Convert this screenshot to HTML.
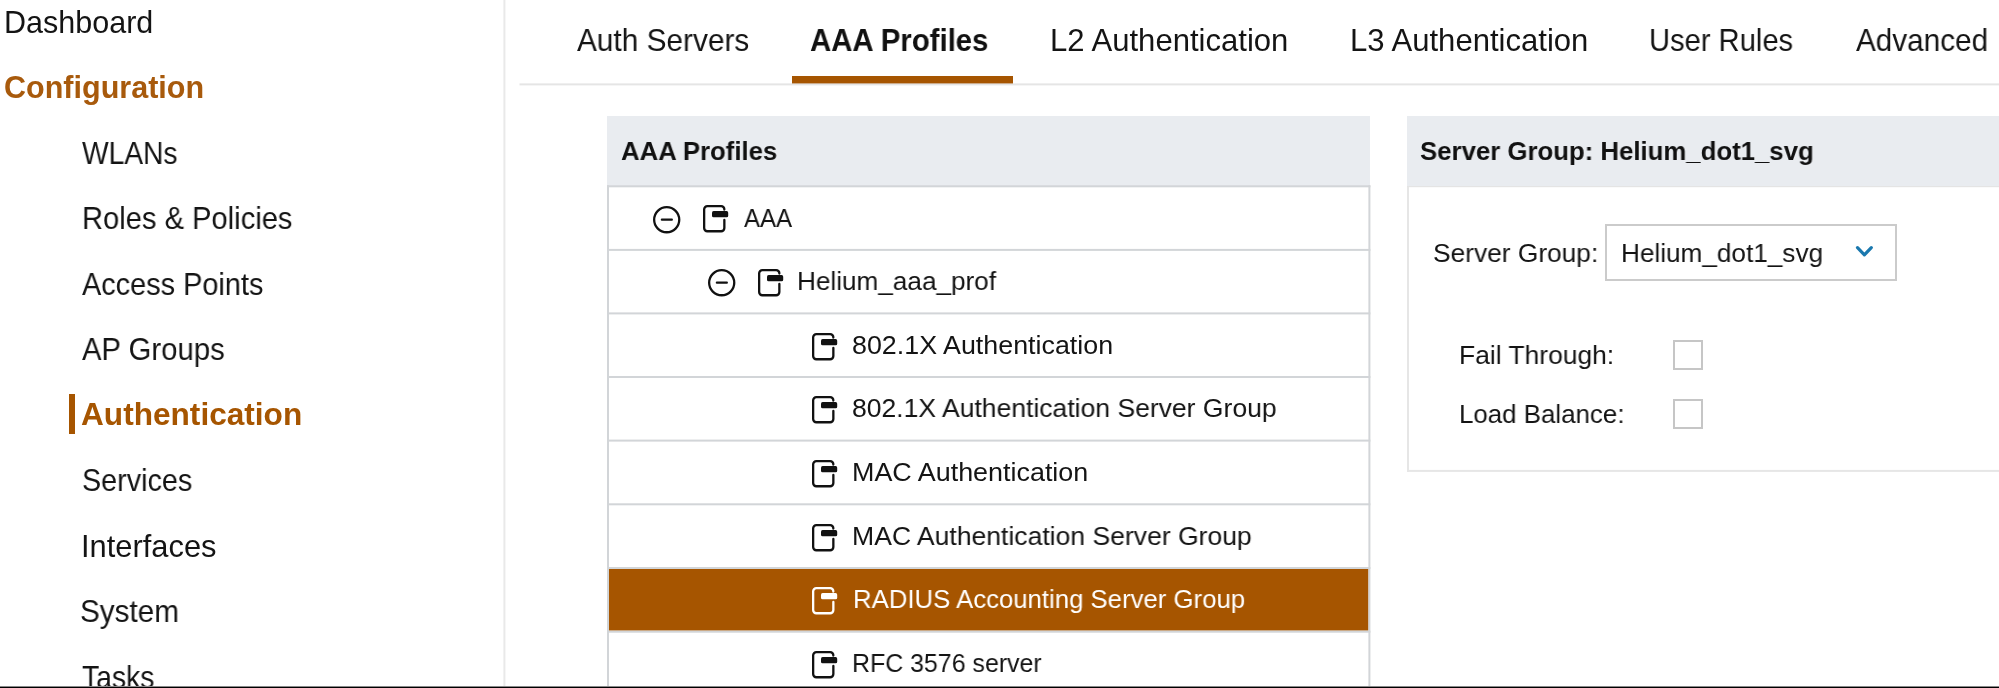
<!DOCTYPE html>
<html><head><meta charset="utf-8"><style>
html,body{margin:0;padding:0;background:#fff;width:1999px;height:688px;overflow:hidden;position:relative}
.t{position:absolute;white-space:nowrap;font-family:"Liberation Sans",sans-serif;line-height:1;transform-origin:0 0;will-change:transform}
.b{position:absolute}
.ic{position:absolute;overflow:visible}
</style></head><body>
<div class="b" style="left:69px;top:394px;width:6px;height:40px;background:#a65500"></div>
<div class="b" style="left:792px;top:76px;width:221px;height:8px;background:#a65500"></div>
<div class="b" style="left:607px;top:116px;width:763px;height:70px;background:#e9ecf0"></div>
<svg class="ic" style="left:0;top:0" width="1999" height="688" viewBox="0 0 1999 688">
<rect x="609" y="569" width="759.5" height="61.6" fill="#a65500"/>
<rect x="607" y="185.30" width="763.4" height="2" fill="#d2d5d8"/>
<rect x="607" y="248.90" width="763.4" height="2" fill="#d2d5d8"/>
<rect x="607" y="312.40" width="763.4" height="2" fill="#d2d5d8"/>
<rect x="607" y="376.00" width="763.4" height="2" fill="#d2d5d8"/>
<rect x="607" y="439.60" width="763.4" height="2" fill="#d2d5d8"/>
<rect x="607" y="503.30" width="763.4" height="2" fill="#d2d5d8"/>
<rect x="607" y="567.00" width="763.4" height="2" fill="#d2d5d8"/>
<rect x="607" y="630.70" width="763.4" height="2" fill="#d2d5d8"/>
<rect x="607" y="185.3" width="2" height="503" fill="#d2d5d8"/>
<rect x="1368.4" y="185.3" width="2" height="503" fill="#d2d5d8"/>
<rect x="503.4" y="0" width="2" height="688" fill="#e9e9e9"/>
<rect x="519.5" y="83.4" width="1480" height="2" fill="#e5e5e5"/>
<rect x="1407" y="185.3" width="2" height="286.6" fill="#e6e6e6"/>
<rect x="1407" y="185.6" width="592" height="1.6" fill="#e4e4e4"/>
<rect x="1407" y="469.9" width="592" height="2" fill="#e6e6e6"/>
</svg>
<div class="b" style="left:1407px;top:116px;width:592px;height:70px;background:#e9ecf0"></div>
<div class="b" style="left:1605px;top:224px;width:288px;height:53px;border:2px solid #cbcbcb"></div>
<svg class="ic" style="left:1855px;top:245px" width="20" height="14" viewBox="0 0 20 14"><path d="M2.5 2.6 L9.4 9.8 L16.3 2.6" fill="none" stroke="#1a78ae" stroke-width="3.2" stroke-linecap="round" stroke-linejoin="round"/></svg>
<div class="b" style="left:1673px;top:340px;width:26px;height:26px;border:2px solid #c6c6c6"></div>
<div class="b" style="left:1673px;top:398.5px;width:26px;height:26px;border:2px solid #c6c6c6"></div>
<svg class="ic" style="left:653.1px;top:205.5px" width="28" height="28" viewBox="0 0 28 28"><circle cx="13.7" cy="13.7" r="12.55" fill="none" stroke="#111" stroke-width="2.3"/><line x1="8.9" y1="13.7" x2="18.8" y2="13.7" stroke="#111" stroke-width="2.3" stroke-linecap="round"/></svg>
<svg class="ic" style="left:702.9px;top:205.4px" width="27" height="28" viewBox="0 0 27 28"><path d="M21.35 4.5 A3.2 3.2 0 0 0 18.15 1.15 H4.35 A3.2 3.2 0 0 0 1.15 4.35 V23.05 A3.2 3.2 0 0 0 4.35 26.25 H18.15 A3.2 3.2 0 0 0 21.35 23.05 V14.9" fill="none" stroke="#111" stroke-width="2.3" stroke-linecap="round"/><rect x="9" y="6.1" width="16.2" height="6.2" rx="1.6" fill="#111"/></svg>
<svg class="ic" style="left:707.6px;top:269.0px" width="28" height="28" viewBox="0 0 28 28"><circle cx="13.7" cy="13.7" r="12.55" fill="none" stroke="#111" stroke-width="2.3"/><line x1="8.9" y1="13.7" x2="18.8" y2="13.7" stroke="#111" stroke-width="2.3" stroke-linecap="round"/></svg>
<svg class="ic" style="left:757.6px;top:268.9px" width="27" height="28" viewBox="0 0 27 28"><path d="M21.35 4.5 A3.2 3.2 0 0 0 18.15 1.15 H4.35 A3.2 3.2 0 0 0 1.15 4.35 V23.05 A3.2 3.2 0 0 0 4.35 26.25 H18.15 A3.2 3.2 0 0 0 21.35 23.05 V14.9" fill="none" stroke="#111" stroke-width="2.3" stroke-linecap="round"/><rect x="9" y="6.1" width="16.2" height="6.2" rx="1.6" fill="#111"/></svg>
<svg class="ic" style="left:812.0px;top:332.7px" width="27" height="28" viewBox="0 0 27 28"><path d="M21.35 4.5 A3.2 3.2 0 0 0 18.15 1.15 H4.35 A3.2 3.2 0 0 0 1.15 4.35 V23.05 A3.2 3.2 0 0 0 4.35 26.25 H18.15 A3.2 3.2 0 0 0 21.35 23.05 V14.9" fill="none" stroke="#111" stroke-width="2.3" stroke-linecap="round"/><rect x="9" y="6.1" width="16.2" height="6.2" rx="1.6" fill="#111"/></svg>
<svg class="ic" style="left:812.0px;top:396.3px" width="27" height="28" viewBox="0 0 27 28"><path d="M21.35 4.5 A3.2 3.2 0 0 0 18.15 1.15 H4.35 A3.2 3.2 0 0 0 1.15 4.35 V23.05 A3.2 3.2 0 0 0 4.35 26.25 H18.15 A3.2 3.2 0 0 0 21.35 23.05 V14.9" fill="none" stroke="#111" stroke-width="2.3" stroke-linecap="round"/><rect x="9" y="6.1" width="16.2" height="6.2" rx="1.6" fill="#111"/></svg>
<svg class="ic" style="left:812.0px;top:459.9px" width="27" height="28" viewBox="0 0 27 28"><path d="M21.35 4.5 A3.2 3.2 0 0 0 18.15 1.15 H4.35 A3.2 3.2 0 0 0 1.15 4.35 V23.05 A3.2 3.2 0 0 0 4.35 26.25 H18.15 A3.2 3.2 0 0 0 21.35 23.05 V14.9" fill="none" stroke="#111" stroke-width="2.3" stroke-linecap="round"/><rect x="9" y="6.1" width="16.2" height="6.2" rx="1.6" fill="#111"/></svg>
<svg class="ic" style="left:812.0px;top:523.5px" width="27" height="28" viewBox="0 0 27 28"><path d="M21.35 4.5 A3.2 3.2 0 0 0 18.15 1.15 H4.35 A3.2 3.2 0 0 0 1.15 4.35 V23.05 A3.2 3.2 0 0 0 4.35 26.25 H18.15 A3.2 3.2 0 0 0 21.35 23.05 V14.9" fill="none" stroke="#111" stroke-width="2.3" stroke-linecap="round"/><rect x="9" y="6.1" width="16.2" height="6.2" rx="1.6" fill="#111"/></svg>
<svg class="ic" style="left:812.0px;top:587.1px" width="27" height="28" viewBox="0 0 27 28"><path d="M21.35 4.5 A3.2 3.2 0 0 0 18.15 1.15 H4.35 A3.2 3.2 0 0 0 1.15 4.35 V23.05 A3.2 3.2 0 0 0 4.35 26.25 H18.15 A3.2 3.2 0 0 0 21.35 23.05 V14.9" fill="none" stroke="#fff" stroke-width="2.3" stroke-linecap="round"/><rect x="9" y="6.1" width="16.2" height="6.2" rx="1.6" fill="#fff"/></svg>
<svg class="ic" style="left:812.0px;top:650.7px" width="27" height="28" viewBox="0 0 27 28"><path d="M21.35 4.5 A3.2 3.2 0 0 0 18.15 1.15 H4.35 A3.2 3.2 0 0 0 1.15 4.35 V23.05 A3.2 3.2 0 0 0 4.35 26.25 H18.15 A3.2 3.2 0 0 0 21.35 23.05 V14.9" fill="none" stroke="#111" stroke-width="2.3" stroke-linecap="round"/><rect x="9" y="6.1" width="16.2" height="6.2" rx="1.6" fill="#111"/></svg>
<div class="t" style="left:3.65px;top:6.98px;font-size:30.5px;font-weight:normal;color:#141414;transform:scaleX(1.0003)">Dashboard</div>
<div class="t" style="left:4.00px;top:72.18px;font-size:30.5px;font-weight:bold;color:#a85a0c;transform:scaleX(1.0008)">Configuration</div>
<div class="t" style="left:82.40px;top:137.78px;font-size:30.5px;font-weight:normal;color:#141414;transform:scaleX(0.9248)">WLANs</div>
<div class="t" style="left:81.85px;top:203.28px;font-size:30.5px;font-weight:normal;color:#141414;transform:scaleX(0.9550)">Roles &amp; Policies</div>
<div class="t" style="left:82.25px;top:268.68px;font-size:30.5px;font-weight:normal;color:#141414;transform:scaleX(0.9474)">Access Points</div>
<div class="t" style="left:81.85px;top:333.58px;font-size:30.5px;font-weight:normal;color:#141414;transform:scaleX(0.9598)">AP Groups</div>
<div class="t" style="left:80.65px;top:399.08px;font-size:30.5px;font-weight:bold;color:#a65500;transform:scaleX(1.0363)">Authentication</div>
<div class="t" style="left:81.80px;top:464.88px;font-size:30.5px;font-weight:normal;color:#141414;transform:scaleX(0.9425)">Services</div>
<div class="t" style="left:80.85px;top:530.58px;font-size:30.5px;font-weight:normal;color:#141414;transform:scaleX(1.0120)">Interfaces</div>
<div class="t" style="left:80.45px;top:595.78px;font-size:30.5px;font-weight:normal;color:#141414;transform:scaleX(0.9738)">System</div>
<div class="t" style="left:82.20px;top:661.68px;font-size:30.5px;font-weight:normal;color:#141414;transform:scaleX(0.9281)">Tasks</div>
<div class="t" style="left:576.55px;top:25.08px;font-size:30.5px;font-weight:normal;color:#141414;transform:scaleX(0.9771)">Auth Servers</div>
<div class="t" style="left:809.60px;top:24.98px;font-size:30.5px;font-weight:bold;color:#111;transform:scaleX(0.9630)">AAA Profiles</div>
<div class="t" style="left:1050.00px;top:25.18px;font-size:30.5px;font-weight:normal;color:#141414;transform:scaleX(1.0187)">L2 Authentication</div>
<div class="t" style="left:1350.00px;top:25.18px;font-size:30.5px;font-weight:normal;color:#141414;transform:scaleX(1.0187)">L3 Authentication</div>
<div class="t" style="left:1649.45px;top:25.18px;font-size:30.5px;font-weight:normal;color:#141414;transform:scaleX(0.9554)">User Rules</div>
<div class="t" style="left:1856.40px;top:25.18px;font-size:30.5px;font-weight:normal;color:#141414;transform:scaleX(0.9735)">Advanced</div>
<div class="t" style="left:620.55px;top:137.78px;font-size:26.6px;font-weight:bold;color:#111;transform:scaleX(0.9671)">AAA Profiles</div>
<div class="t" style="left:1420.25px;top:137.78px;font-size:26.6px;font-weight:bold;color:#111;transform:scaleX(0.9687)">Server Group: Helium_dot1_svg</div>
<div class="t" style="left:743.60px;top:204.58px;font-size:26.6px;font-weight:normal;color:#141414;transform:scaleX(0.9030)">AAA</div>
<div class="t" style="left:797.45px;top:268.18px;font-size:26.6px;font-weight:normal;color:#141414;transform:scaleX(0.9826)">Helium_aaa_prof</div>
<div class="t" style="left:852.20px;top:331.78px;font-size:26.6px;font-weight:normal;color:#141414;transform:scaleX(1.0089)">802.1X Authentication</div>
<div class="t" style="left:852.20px;top:395.38px;font-size:26.6px;font-weight:normal;color:#141414;transform:scaleX(0.9972)">802.1X Authentication Server Group</div>
<div class="t" style="left:851.80px;top:458.98px;font-size:26.6px;font-weight:normal;color:#141414;transform:scaleX(1.0115)">MAC Authentication</div>
<div class="t" style="left:851.80px;top:522.58px;font-size:26.6px;font-weight:normal;color:#141414;transform:scaleX(0.9979)">MAC Authentication Server Group</div>
<div class="t" style="left:852.85px;top:586.18px;font-size:26.6px;font-weight:normal;color:#ffffff;transform:scaleX(0.9681)">RADIUS Accounting Server Group</div>
<div class="t" style="left:851.80px;top:649.78px;font-size:26.6px;font-weight:normal;color:#141414;transform:scaleX(0.9369)">RFC 3576 server</div>
<div class="t" style="left:1433.25px;top:240.08px;font-size:26.6px;font-weight:normal;color:#141414;transform:scaleX(0.9893)">Server Group:</div>
<div class="t" style="left:1621.00px;top:239.78px;font-size:26.6px;font-weight:normal;color:#141414;transform:scaleX(0.9833)">Helium_dot1_svg</div>
<div class="t" style="left:1458.65px;top:342.28px;font-size:26.6px;font-weight:normal;color:#141414;transform:scaleX(0.9935)">Fail Through:</div>
<div class="t" style="left:1458.65px;top:400.68px;font-size:26.6px;font-weight:normal;color:#141414;transform:scaleX(0.9732)">Load Balance:</div>
<div class="b" style="left:0;top:686px;width:1999px;height:1px;background:#888"></div>
<div class="b" style="left:0;top:687px;width:1999px;height:1px;background:#000"></div>
</body></html>
